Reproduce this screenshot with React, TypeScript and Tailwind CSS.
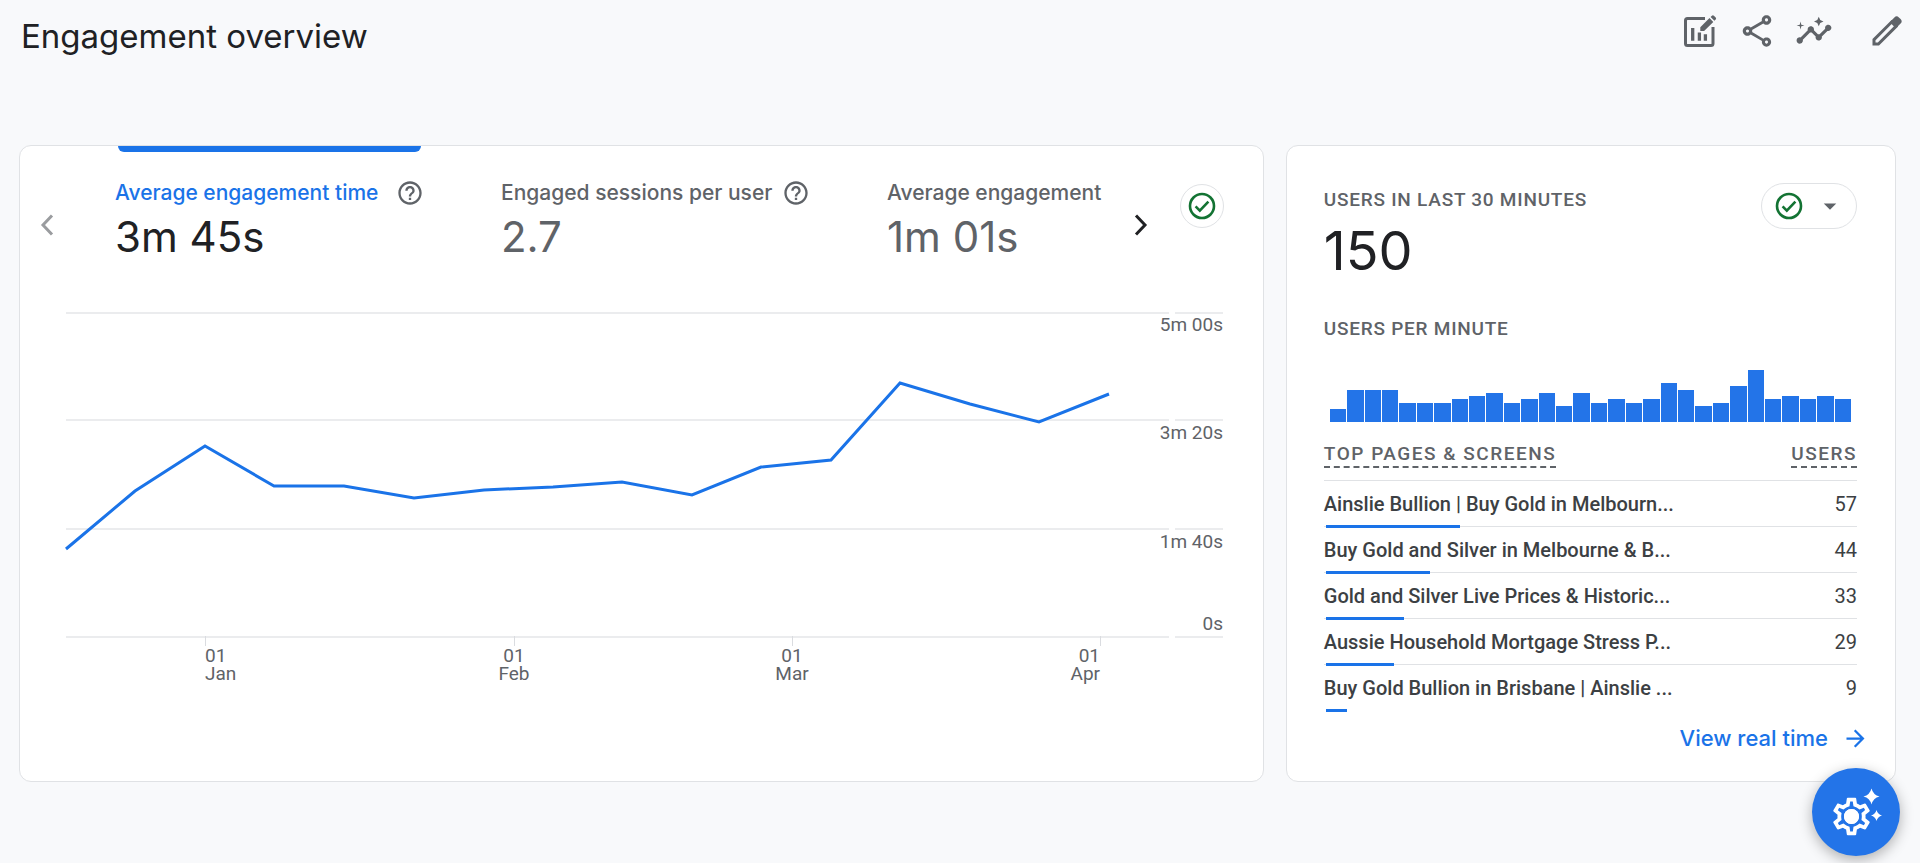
import { useState } from "react";
import {
  MdArrowDropDown,
  MdArrowForward,
  MdHelpOutline,
  MdInsights,
  MdOutlineSettings,
  MdOutlineShare,
} from "react-icons/md";
import clsx from "clsx";

const metrics = [
  { label: "Average engagement time", value: "3m 45s", help: true },
  { label: "Engaged sessions per user", value: "2.7", help: true },
  { label: "Average engagement", value: "1m 01s", help: false },
];

const linePoints = [
  [0, 237],
  [69, 179],
  [139, 134],
  [208, 174],
  [278, 174],
  [348, 186],
  [418, 178],
  [487, 175],
  [556, 170],
  [626, 183],
  [695, 155],
  [765, 148],
  [834, 71],
  [904, 92],
  [973, 110],
  [1043, 82],
];

const yAxis = [
  { y: 1, textY: 19, label: "5m 00s" },
  { y: 108, textY: 127, label: "3m 20s" },
  { y: 217, textY: 236, label: "1m 40s" },
  { y: 325, textY: 318, label: "0s" },
];

const xAxis = [
  { x: 139, month: "Jan", anchor: "start" },
  { x: 448, month: "Feb", anchor: "middle" },
  { x: 726, month: "Mar", anchor: "middle" },
  { x: 1034, month: "Apr", anchor: "end" },
] as const;

const usersPerMinute = [
  4, 10, 10, 10, 6, 6, 6, 7, 8, 9, 6, 7, 9, 5, 9, 6, 7, 6, 7, 12, 10, 5, 6, 11,
  16, 7, 8, 7, 8, 7,
];

const pages = [
  { title: "Ainslie Bullion | Buy Gold in Melbourn...", users: 57 },
  { title: "Buy Gold and Silver in Melbourne & B...", users: 44 },
  { title: "Gold and Silver Live Prices & Historic...", users: 33 },
  { title: "Aussie Household Mortgage Stress P...", users: 29 },
  { title: "Buy Gold Bullion in Brisbane | Ainslie ...", users: 9 },
];

const totalViews = 226;

function EditChartIcon() {
  return (
    <svg width="38" height="38" viewBox="0 0 38 38" fill="none">
      <path
        d="M24 6.5H6.5A2 2 0 0 0 4.5 8.5v23a2 2 0 0 0 2 2H30a2 2 0 0 0 2-2V15"
        stroke="currentColor"
        strokeWidth="3"
      />
      <path
        d="M11.7 16v12.8M18.4 20.6v8.2M24.4 22.3v6.5"
        stroke="currentColor"
        strokeWidth="3.3"
      />
      <path
        d="M19.3 15.3l9.2-9.2 3.8 3.8-9.2 9.2h-3.8zM29.6 5l1.3-1.3a1.5 1.5 0 0 1 2 0l1.8 1.8a1.5 1.5 0 0 1 0 2l-1.3 1.3z"
        fill="currentColor"
      />
    </svg>
  );
}

function PencilIcon() {
  return (
    <svg width="38" height="38" viewBox="0 0 38 38" fill="none">
      <path
        d="M6 27.6V32h4.4L28 14.4 23.6 10z"
        stroke="currentColor"
        strokeWidth="3"
      />
      <path
        d="M22.4 9.4l4-4a3.2 3.2 0 0 1 4.5 0l1.7 1.7a3.2 3.2 0 0 1 0 4.5l-4 4z"
        fill="currentColor"
      />
    </svg>
  );
}

function CheckIcon() {
  return (
    <svg
      width="28"
      height="28"
      viewBox="0 0 28 28"
      fill="none"
      stroke="#137333"
      strokeWidth="2.6"
    >
      <circle cx="14" cy="14" r="12" />
      <path d="M7.6 14.4l4.2 4.2 8.6-9" />
    </svg>
  );
}

function Chevron({ direction }: { direction: "left" | "right" }) {
  return (
    <svg
      width="14"
      height="24"
      viewBox="0 0 14 24"
      fill="none"
      stroke="currentColor"
      strokeWidth="3"
    >
      <path d={direction === "left" ? "M12 2.5L3 12l9 9.5" : "M2 2.5l9 9.5-9 9.5"} />
    </svg>
  );
}

function LineChart() {
  return (
    <svg
      viewBox="0 0 1157 378"
      preserveAspectRatio="xMinYMin"
      className="h-[378px] w-full overflow-visible"
      role="img"
      aria-label="Average engagement time"
    >
      {yAxis.map((row) => (
        <g key={row.label}>
          <path
            d={`M0 ${row.y}H1103M1109 ${row.y}H1157`}
            stroke="#ebecee"
            strokeWidth="2"
          />
          <text
            x="1157"
            y={row.textY}
            textAnchor="end"
            className="fill-[#5f6368] text-[19px]"
          >
            {row.label}
          </text>
        </g>
      ))}
      {xAxis.map((tick) => (
        <g key={tick.month}>
          <path d={`M${tick.x + 0.5} 324V334`} stroke="#dadce0" />
          <text
            y="350"
            textAnchor={tick.anchor}
            className="fill-[#5f6368] text-[19px]"
          >
            <tspan x={tick.x}>01</tspan>
            <tspan x={tick.x} dy="18">
              {tick.month}
            </tspan>
          </text>
        </g>
      ))}
      <polyline
        points={linePoints.map((p) => p.join(",")).join(" ")}
        fill="none"
        stroke="#1a73e8"
        strokeWidth="3"
      />
    </svg>
  );
}

function EngagementCard() {
  const [active, setActive] = useState(0);

  return (
    <section className="min-w-0 rounded-xl border border-[#e0e2e5] bg-white">
      <div className="flex items-start pr-[39px]">
        <button
          type="button"
          aria-label="Previous metrics"
          className="mt-[55px] flex h-12 w-[54px] shrink-0 items-center justify-center text-[#9a9c9f]"
        >
          <Chevron direction="left" />
        </button>
        <div role="tablist" className="ml-[41px] flex min-w-0 flex-1 gap-[77px] overflow-hidden">
          {metrics.map((metric, index) => (
            <button
              key={metric.label}
              type="button"
              role="tab"
              aria-selected={active === index}
              onClick={() => setActive(index)}
              className="w-[309px] shrink-0 text-left font-[Inter,sans-serif]"
            >
              <span
                className={clsx("mx-[3px] block h-1.5 rounded-b-md", {
                  "bg-[#1a73e8]": active === index,
                })}
              />
              <span
                className={clsx(
                  "mt-[27px] flex items-center justify-between text-[21px] leading-7 font-medium whitespace-nowrap",
                  active === index ? "text-[#1a73e8]" : "text-[#5f6368]",
                )}
              >
                {metric.label}
                {metric.help && (
                  <MdHelpOutline size={28} className="shrink-0 text-[#5f6368]" />
                )}
              </span>
              <span
                className={clsx(
                  "mt-1 block text-[42px] leading-[52px]",
                  active === index ? "text-[#202124]" : "text-[#5f6368]",
                )}
              >
                {metric.value}
              </span>
            </button>
          ))}
        </div>
        <button
          type="button"
          aria-label="Next metrics"
          className="mt-[55px] flex h-12 w-[54px] shrink-0 items-center justify-center text-[#202124]"
        >
          <Chevron direction="right" />
        </button>
        <button
          type="button"
          aria-label="Data quality"
          className="mt-[38px] ml-3 flex size-11 shrink-0 items-center justify-center rounded-full border border-[#e0e2e5]"
        >
          <CheckIcon />
        </button>
      </div>
      <div className="mt-[49px] pr-[39px] pb-[91px] pl-[46px]">
        <LineChart />
      </div>
    </section>
  );
}

function RealtimeCard() {
  return (
    <section className="min-w-0 rounded-xl border border-[#e0e2e5] bg-white pt-[37px] pr-[38px] pl-[37px]">
      <div className="flex items-start justify-between">
        <div className="pt-[3px]">
          <h2 className="text-[19px] leading-7 font-medium tracking-[0.04em] text-[#5f6368]">
            USERS IN LAST 30 MINUTES
          </h2>
          <p className="mt-[5px] font-[Inter,sans-serif] text-[54px] leading-[64px] text-[#202124]">
            150
          </p>
        </div>
        <button
          type="button"
          aria-label="Data quality options"
          className="flex h-[46px] w-24 items-center justify-between rounded-full border border-[#e0e2e5] pr-[11px] pl-[13px]"
        >
          <CheckIcon />
          <MdArrowDropDown size={30} className="text-[#5f6368]" />
        </button>
      </div>

      <h3 className="mt-8 text-[19px] leading-7 font-medium tracking-[0.04em] text-[#5f6368]">
        USERS PER MINUTE
      </h3>
      <div className="mt-[27px] flex h-[52px] items-end gap-px px-1.5">
        {usersPerMinute.map((count, index) => (
          <div
            key={index}
            className="flex-1 bg-[#2374e8]"
            style={{ height: `${(count / 16) * 100}%` }}
          />
        ))}
      </div>

      <table className="w-full border-separate border-spacing-0">
        <thead>
          <tr className="text-[19px] leading-6 text-[#5f6368]">
            <th className="border-b border-[#e0e2e5] pt-5 pb-3 text-left font-medium">
              <span className="inline-block border-b-2 border-dashed border-[#5f6368] tracking-[0.08em]">
                TOP PAGES &amp; SCREENS
              </span>
            </th>
            <th className="border-b border-[#e0e2e5] pt-5 pb-3 text-right font-medium">
              <span className="inline-block border-b-2 border-dashed border-[#5f6368] tracking-[0.08em]">
                USERS
              </span>
            </th>
          </tr>
        </thead>
        <tbody className="text-xl leading-6 text-[#3c4043]">
          {pages.map((page, index) => (
            <tr key={page.title} className="relative">
              <td
                className={clsx("h-[46px] font-medium whitespace-nowrap", {
                  "border-b border-[#e0e2e5]": index < pages.length - 1,
                })}
              >
                {page.title}
                <span
                  className="absolute bottom-[-1px] left-0.5 h-[3px] bg-[#1a73e8]"
                  style={{ width: `${(page.users / totalViews) * 100}%` }}
                />
              </td>
              <td
                className={clsx("text-right", {
                  "border-b border-[#e0e2e5]": index < pages.length - 1,
                })}
              >
                {page.users}
              </td>
            </tr>
          ))}
        </tbody>
      </table>

      <a
        href="#realtime"
        className="mt-[13px] -mr-3 flex items-center justify-end gap-[14px] font-[Inter,sans-serif] text-[22px] leading-7 font-medium text-[#1a73e8]"
      >
        View real time
        <MdArrowForward size={27} />
      </a>
    </section>
  );
}

export default function App() {
  return (
    <div className="min-h-screen bg-[#f8f9fb] font-[Roboto,sans-serif]">
      <header className="flex h-[145px] items-start justify-between pt-3 pr-[14px] pl-[21px]">
        <h1 className="pt-1 font-[Inter,sans-serif] text-[33px] leading-10 text-[#202124]">
          Engagement overview
        </h1>
        <div className="flex gap-[19px] text-[#5f6368]">
          <button type="button" aria-label="Customise report">
            <EditChartIcon />
          </button>
          <button type="button" aria-label="Share">
            <MdOutlineShare size={38} />
          </button>
          <button type="button" aria-label="Insights">
            <MdInsights size={38} />
          </button>
          <button type="button" aria-label="Edit" className="ml-4">
            <PencilIcon />
          </button>
        </div>
      </header>

      <main className="grid grid-cols-[51fr_25fr] gap-[22px] pr-6 pb-20 pl-[19px]">
        <EngagementCard />
        <RealtimeCard />
      </main>

      <button
        type="button"
        aria-label="Assistant settings"
        className="fixed right-5 bottom-[7px] flex size-[88px] items-center justify-center rounded-full bg-[#2374e8] text-white shadow-[0_4px_14px_rgba(0,0,0,0.3)]"
      >
        <svg width="60" height="60" viewBox="0 0 60 60" fill="currentColor">
          <MdOutlineSettings x="3" y="12" size={45} />
          <circle cx="25.5" cy="34.5" r="7.5" />
          <path d="M45.5 6.5q1.6 6.4 8 8-6.4 1.6-8 8-1.6-6.4-8-8 6.4-1.6 8-8z" />
          <path d="M50.5 28q1.2 4.3 5.5 5.5-4.3 1.2-5.5 5.5-1.2-4.3-5.5-5.5 4.3-1.2 5.5-5.5z" />
        </svg>
      </button>
    </div>
  );
}
